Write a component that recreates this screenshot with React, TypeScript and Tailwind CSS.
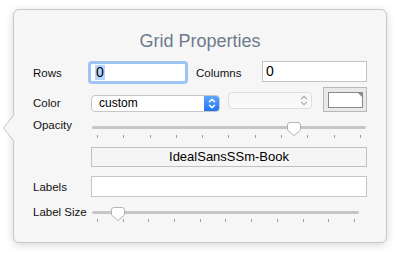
import React from 'react';

const font = { fontFamily: '"Liberation Sans", Arial, sans-serif' };

// slider knob: rounded top, pointed bottom
function Knob({ className }: { className: string }) {
  return (
    <svg className={className} width="14" height="14" viewBox="0 0 14 14">
      <path
        d="M3 0.5 H11 A2.5 2.5 0 0 1 13.5 3 V8 L7 13.5 L0.5 8 V3 A2.5 2.5 0 0 1 3 0.5 Z"
        fill="#ffffff"
        stroke="#b4b4b4"
        strokeWidth="1"
      />
    </svg>
  );
}

function Ticks({ className }: { className: string }) {
  return (
    <div className={`flex justify-between h-[3px] ${className}`}>
      {Array.from({ length: 11 }).map((_, i) => (
        <div key={i} className="w-px h-[3px] bg-[#9d9d9d]" />
      ))}
    </div>
  );
}

function Chevrons({ color }: { color: string }) {
  return (
    <svg width="8" height="13" viewBox="0 0 8 13">
      <path d="M1.5 4.8 L4 2.2 L6.5 4.8" fill="none" stroke={color} strokeWidth="1.4" strokeLinecap="round" strokeLinejoin="round" />
      <path d="M1.5 8.2 L4 10.8 L6.5 8.2" fill="none" stroke={color} strokeWidth="1.4" strokeLinecap="round" strokeLinejoin="round" />
    </svg>
  );
}

export default function App() {
  return (
    <div className="w-[396px] h-[254px] bg-white pt-[9px] pl-[13px]" style={font}>
      <div className="relative w-[374px] h-[234px] bg-[#f6f6f6] border border-[#c9c9c9] rounded-[6px] shadow-[0_2px_8px_rgba(0,0,0,0.16)] pl-[19px] pr-[19px]">
        {/* popover arrow */}
        <svg className="absolute left-[-12px] top-[104px]" width="13" height="28" viewBox="0 0 13 28">
          <path d="M13 0 L12 0 L1.5 14 L12 28 L13 28 Z" fill="#f6f6f6" />
          <path d="M12 0.5 L1.5 14 L12 27.5" fill="none" stroke="#c4c4c4" strokeWidth="1" />
        </svg>

        {/* title */}
        <div className="mt-[22px] h-[18px] text-[18px] leading-[18px] text-center text-[#6c7b8c]">
          Grid Properties
        </div>

        {/* rows / columns */}
        <div className="mt-[11px] flex items-start h-[23px] text-[11.5px] text-[#111111]">
          <div className="w-[55px] mt-[5px] leading-[14px]">Rows</div>
          <div className="w-[100px] h-[23px] border-[3px] border-[#9ec4f2] rounded-[4px] bg-white flex items-center pl-[4px]">
            <span className="text-[14px] leading-[15px] bg-[#b4d5fe] px-[1px] text-black">0</span>
          </div>
          <div className="ml-[8px] w-[66px] mt-[5px] leading-[14px]">Columns</div>
          <div className="w-[105px] h-[21px] border border-[#c3c3c3] bg-white flex items-center pl-[3px] text-[14px] text-black">
            0
          </div>
        </div>

        {/* color */}
        <div className="mt-[3px] flex items-start h-[25px] text-[11.5px] text-[#111111]">
          <div className="w-[58px] mt-[9px] leading-[14px]">Color</div>
          <div className="mt-[8px] w-[129px] h-[17px] rounded-[4px] border border-[#c6c6c6] bg-white flex overflow-hidden">
            <div className="flex-1 text-[12px] leading-[15px] pl-[7px] text-black">custom</div>
            <div className="w-[15px] h-full bg-gradient-to-b from-[#5ea5fb] to-[#1f74f2] flex items-center justify-center">
              <Chevrons color="#ffffff" />
            </div>
          </div>
          <div className="ml-[8px] mt-[5px] w-[84px] h-[17px] rounded-[4px] border border-[#dedede] bg-[#f9f9f9] flex items-center justify-end pr-[3px]">
            <Chevrons color="#b9b9b9" />
          </div>
          <div className="ml-[11px] w-[44px] h-[25px] border border-[#b9b9b9] bg-[#e9e9e9] flex items-center justify-center">
            <div className="relative w-[35px] h-[16px] border-[1.5px] border-[#8a8a8a] bg-white">
              <svg className="absolute right-[-1px] top-[-1px]" width="6" height="6" viewBox="0 0 6 6">
                <path d="M0 0 H6 V6 Z" fill="#8a8a8a" />
              </svg>
            </div>
          </div>
        </div>

        {/* opacity */}
        <div className="mt-[6px] flex items-start h-[20px] text-[11.5px] text-[#111111]">
          <div className="w-[59px] leading-[14px]">Opacity</div>
          <div className="relative w-[274px]">
            <div className="mt-[8px] h-[3px] rounded-full bg-[#c6c6c6]" />
            <Ticks className="mt-[6px] pl-[5px] pr-[5px]" />
            <Knob className="absolute left-[195px] top-[4px]" />
          </div>
        </div>

        {/* font */}
        <div className="mt-[9px] ml-[58px] w-[276px] h-[20px] border border-[#c0c0c0] bg-[#f5f5f5] text-[13px] leading-[18px] text-center text-black">
          IdealSansSSm-Book
        </div>

        {/* labels */}
        <div className="mt-[9px] flex items-center h-[21px] text-[11.5px] text-[#111111]">
          <div className="w-[58px] leading-[14px]">Labels</div>
          <div className="w-[276px] h-[21px] border border-[#c6c6c6] bg-white" />
        </div>

        {/* label size */}
        <div className="mt-[8px] flex items-start h-[17px] text-[11.5px] text-[#111111]">
          <div className="w-[59px] leading-[14px]">Label Size</div>
          <div className="relative w-[267px]">
            <div className="mt-[6px] h-[3px] rounded-full bg-[#c6c6c6]" />
            <Ticks className="mt-[5px] pl-[5px] pr-[4px]" />
            <Knob className="absolute left-[19px] top-[2px]" />
          </div>
        </div>
      </div>
    </div>
  );
}
